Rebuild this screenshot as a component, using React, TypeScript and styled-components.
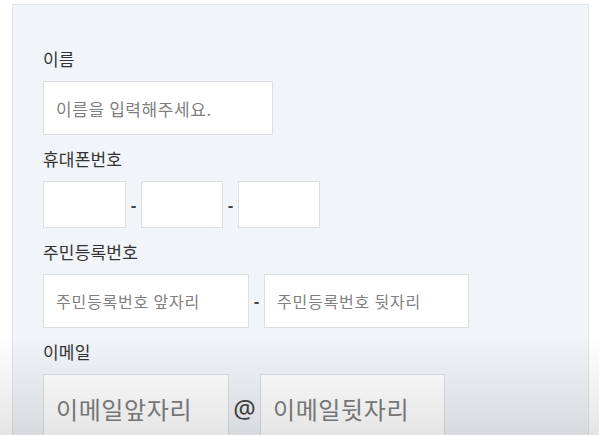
import React from "react";
import styled, { createGlobalStyle } from "styled-components";

const Global = createGlobalStyle`
  html, body { margin: 0; padding: 0; background: #ffffff; }
  body { font-family: "Noto Sans CJK KR", "Noto Sans", sans-serif; overflow: hidden; }
  * { box-sizing: border-box; }
`;

const Page = styled.div`
  width: 599px;
  height: 435px;
  padding: 4px 0 0 12px;
  overflow: hidden;
`;

const Panel = styled.form`
  width: 577px;
  height: 460px;
  background: #f1f4f8;
  border: 1px solid #e2e4e7;
  padding: 42px 0 0 30px;
  display: flex;
  flex-direction: column;
  gap: 12px;
`;

const Field = styled.div`
  display: flex;
  flex-direction: column;
  gap: 10px;
`;

const Label = styled.label`
  font-size: 17px;
  line-height: 24px;
  color: #333;
  letter-spacing: 0.2px;
`;

const Row = styled.div`
  display: flex;
  align-items: center;
`;

const Input = styled.input<{ $w: number; $h: number; $fs?: number; $ls?: number }>`
  width: ${(p) => p.$w}px;
  height: ${(p) => p.$h}px;
  background: #ffffff;
  border: 1px solid #dcdfe2;
  border-radius: 0;
  padding: 0 0 0 12px;
  font-family: "Noto Sans CJK KR", sans-serif;
  font-size: ${(p) => p.$fs ?? 15}px;
  letter-spacing: ${(p) => p.$ls ?? 0}px;
  color: #333;
  outline: none;
  &::placeholder { color: #7f7f7f; }
`;

const Sep = styled.span<{ $w: number; $fs?: number; $bold?: boolean }>`
  width: ${(p) => p.$w}px;
  text-align: center;
  font-size: ${(p) => p.$fs ?? 16}px;
  font-weight: ${(p) => (p.$bold ? 700 : 400)};
  color: #444;
  font-family: "Noto Sans", sans-serif;
`;

const Shade = styled.div`
  position: fixed;
  left: 0;
  right: 0;
  bottom: 0;
  height: 100px;
  background: linear-gradient(to bottom, rgba(0, 0, 0, 0) 0%, rgba(0, 0, 0, 0.1) 100%);
  pointer-events: none;
`;

export default function App() {
  return (
    <>
      <Global />
      <Page>
        <Panel>
          <Field>
            <Label>이름</Label>
            <Input $w={230} $h={54} $fs={17} $ls={0.6} placeholder="이름을 입력해주세요." />
          </Field>
          <Field>
            <Label>휴대폰번호</Label>
            <Row>
              <Input $w={83} $h={47} />
              <Sep $w={15} $bold>-</Sep>
              <Input $w={82} $h={47} />
              <Sep $w={15} $bold>-</Sep>
              <Input $w={82} $h={47} />
            </Row>
          </Field>
          <Field>
            <Label>주민등록번호</Label>
            <Row>
              <Input $w={206} $h={54} $fs={16} $ls={0.8} placeholder="주민등록번호 앞자리" />
              <Sep $w={15} $bold>-</Sep>
              <Input $w={205} $h={54} $fs={16} $ls={0.8} placeholder="주민등록번호 뒷자리" />
            </Row>
          </Field>
          <Field>
            <Label>이메일</Label>
            <Row>
              <Input $w={186} $h={68} $fs={24} $ls={0.6} placeholder="이메일앞자리" />
              <Sep $w={31} $fs={25}>@</Sep>
              <Input $w={185} $h={68} $fs={24} $ls={0.6} placeholder="이메일뒷자리" />
            </Row>
          </Field>
        </Panel>
      </Page>
      <Shade />
    </>
  );
}
